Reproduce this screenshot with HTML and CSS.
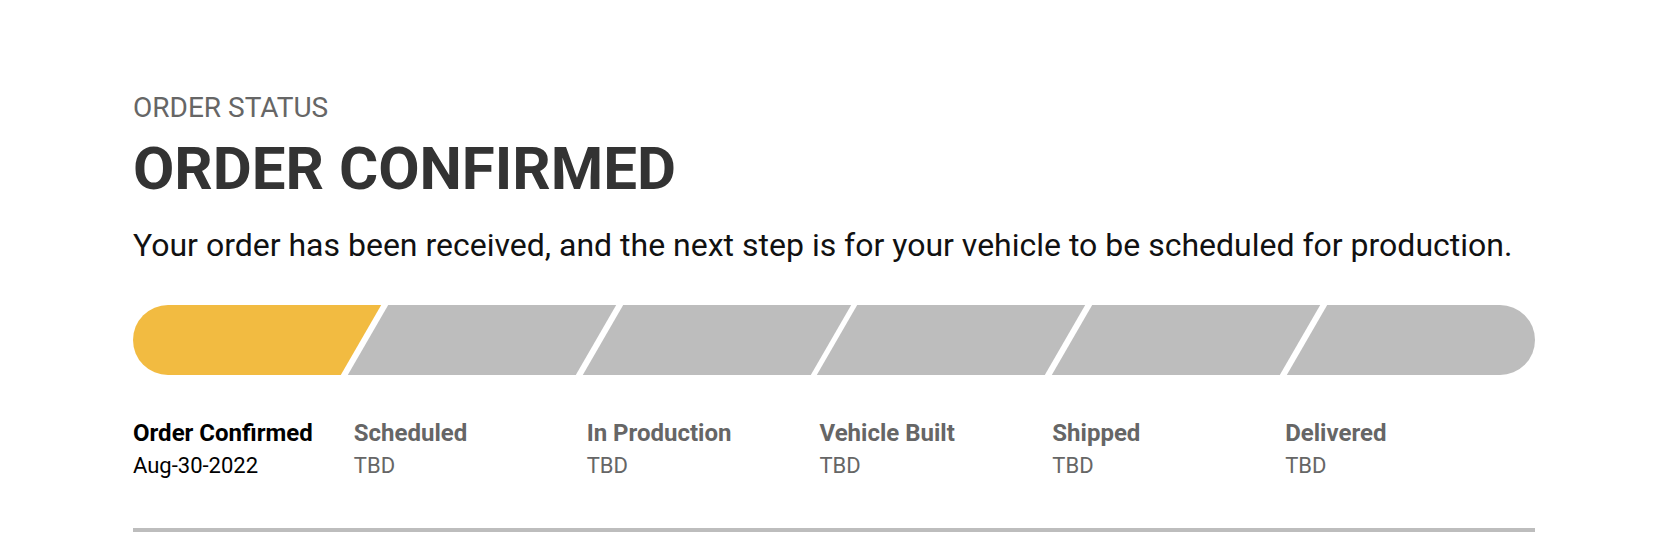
FILE: index.html
```html
<!DOCTYPE html>
<html lang="en">
<head>
  <meta charset="UTF-8" />
  <meta name="viewport" content="width=device-width, initial-scale=1.0"/>
  <title>Order Status</title>
  <link rel="stylesheet" href="styles.css">
</head>
<body>
  <div class="status">
    <p class="eyebrow">ORDER STATUS</p>
    <h1>ORDER CONFIRMED</h1>
    <p class="lead">Your order has been received, and the next step is for your vehicle to be scheduled for production.</p>

    <div class="bar">
      <div class="seg done"></div>
      <div class="seg"></div>
      <div class="seg"></div>
      <div class="seg"></div>
      <div class="seg"></div>
      <div class="seg"></div>
    </div>

    <div class="steps">
      <div class="step done">
        <div class="name">Order Confirmed</div>
        <div class="date">Aug-30-2022</div>
      </div>
      <div class="step">
        <div class="name">Scheduled</div>
        <div class="date">TBD</div>
      </div>
      <div class="step">
        <div class="name">In Production</div>
        <div class="date">TBD</div>
      </div>
      <div class="step">
        <div class="name">Vehicle Built</div>
        <div class="date">TBD</div>
      </div>
      <div class="step">
        <div class="name">Shipped</div>
        <div class="date">TBD</div>
      </div>
      <div class="step">
        <div class="name">Delivered</div>
        <div class="date">TBD</div>
      </div>
    </div>

    <div class="divider"></div>
  </div>
</body>
</html>
```

FILE: styles.css
```css
body {
  margin: 0;
  font-family: Roboto, 'Liberation Sans', sans-serif;
  background: #fff;
  color: #111;
}

.status {
  width: 1402px;
  padding: 94px 0 0 133px;
}

.eyebrow {
  margin: 0;
  font-size: 28px;
  line-height: 28px;
  color: #666;
}

h1 {
  margin: 17px 0 0;
  font-size: 60px;
  line-height: 60px;
  font-weight: 700;
  color: #333;
}

.lead {
  margin: 30px 0 0;
  font-size: 32px;
  line-height: 32px;
  color: #111;
}

/* progress bar: skewed segments clipped by a pill */
.bar {
  display: flex;
  gap: 7px;
  height: 70px;
  margin-top: 44px;
  border-radius: 35px;
  overflow: hidden;
}

.seg {
  flex: 1;
  background: #bdbdbd;
  transform: skewX(-30deg);
}

.seg:first-child {
  margin-left: -40px;
  padding-left: 40px;
}

.seg:last-child {
  margin-right: -40px;
  padding-right: 40px;
}

.seg.done {
  background: #f2bb41;
}

.steps {
  display: grid;
  grid-template-columns: repeat(6, 1fr);
  margin: 46px 5px 0 0;
}

.step + .step {
  margin-left: -12px;
}

.name {
  font-size: 24px;
  line-height: 24px;
  font-weight: 700;
  color: #666;
}

.date {
  margin-top: 10px;
  font-size: 22px;
  line-height: 22px;
  color: #666;
}

.step.done .name,
.step.done .date {
  color: #000;
}

.divider {
  height: 4px;
  margin-top: 51px;
  background: #bdbdbd;
}
```
